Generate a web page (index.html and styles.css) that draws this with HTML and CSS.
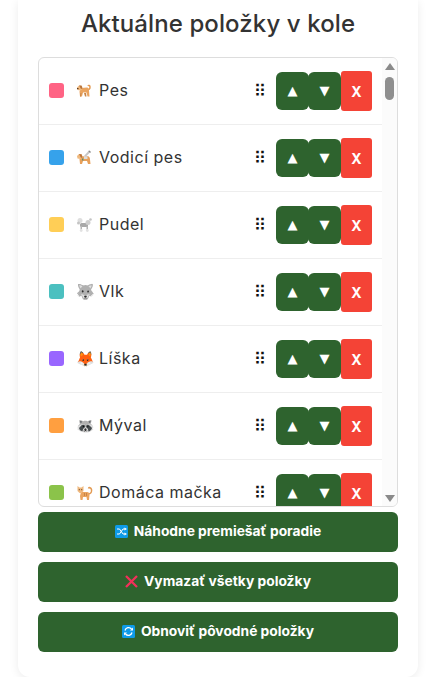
FILE: index.html
```html
<!DOCTYPE html>
<html lang="sk">
<head>
    <meta charset="UTF-8">
    <meta name="viewport" content="width=device-width, initial-scale=1.0">
    <title>Aktuálne položky v kole</title>
    <link rel="stylesheet" href="styles.css">
</head>
<body>
    <svg class="defs" aria-hidden="true">
        <symbol id="dog" viewBox="0 0 17 16">
            <path d="M11 6c2 1 3 0 3-2 0-1.500-1.500-2-2-1" fill="none" stroke="#e39a52" stroke-width="1.500"/>
            <path d="M5 5l6-.5c1.500 0 2 1.500 2 3l.5 6h-2l-1-4H7l-1 4H4l-.5-5z" fill="#eaa45f"/>
            <path d="M1 4.500L3 2.500l3 .5.500 3-2 1.500-3-.5z" fill="#f0b97e"/>
            <path d="M3 2.500l2.500 0 1 3-1.500.5z" fill="#b9743a"/>
            <path d="M8 10h2l.5 3.500H9zM4.500 10l1 0-.5 3.500H4z" fill="#c98547"/>
            <rect x="1" y="5" width="1.500" height="1.200" fill="#5b3a20"/>
        </symbol>
        <symbol id="guide-dog" viewBox="0 0 17 16">
            <path d="M5 6.500l6-.5c2 0 3 1.500 3 3.500l.5 4.500h-2.500L11 11H7l-1 3H4l-.5-5z" fill="#e8a05a"/>
            <path d="M1 6l2-2 3 .5.500 3-2 1.500-3-.5z" fill="#f0b97e"/>
            <path d="M3 4l2.500 .2 1 3L5 8z" fill="#b9743a"/>
            <path d="M6 9l1-.8.500 2-1 .5z" fill="#2f8f7f"/>
            <path d="M8 6l4-4.500 2 1-3.500 3.500z" fill="#c7c7c7"/>
            <path d="M12 1l1.500-.5 1.500 1.500-1 1z" fill="#8a8a8a"/>
            <path d="M8 6.200h3.500V9H8z" fill="#dcdcdc"/>
        </symbol>
        <symbol id="poodle" viewBox="0 0 17 16">
            <circle cx="4" cy="3.500" r="2.500" fill="#dedede"/>
            <circle cx="2.500" cy="6" r="1.500" fill="#c4c4c4"/>
            <rect x="4" y="6" width="8" height="4" rx="1.500" fill="#a9a9a9"/>
            <circle cx="12" cy="5.500" r="2.500" fill="#cfcfcf"/>
            <circle cx="14.500" cy="2.500" r="1.300" fill="#c4c4c4"/>
            <path d="M4.500 9h1.500v3.500H4.500zM10.500 9H12v3.500h-1.500z" fill="#b5b5b5"/>
            <circle cx="5.200" cy="13.500" r="1.400" fill="#e2e2e2"/>
            <circle cx="11.300" cy="13.500" r="1.400" fill="#e2e2e2"/>
        </symbol>
        <symbol id="cat" viewBox="0 0 17 16">
            <path d="M12 9c3 0 4-2 3.500-4.500C15 2.500 13 2 12.500 3.500" fill="none" stroke="#e39a52" stroke-width="1.500"/>
            <path d="M5 7h6c2 0 2.500 1.500 2.500 3l-.5 5h-2l-.5-3H7l-.5 3h-2l-.5-4z" fill="#eaa45f"/>
            <path d="M1.500 1l2 1.500h2L7.500 1 7.500 6 5.500 8h-2L1.500 6z" fill="#f0b97e"/>
            <path d="M8 8h1v3H8zM10 8h1v3h-1z" fill="#c98547"/>
            <rect x="2.800" y="4.200" width="1" height="1" fill="#5b3a20"/>
            <rect x="5.200" y="4.200" width="1" height="1" fill="#5b3a20"/>
        </symbol>
    </svg>

    <div class="card">
        <h2>Aktuálne položky v kole</h2>

        <div class="list-box">
            <ul class="item-list">
                <li class="item">
                    <span class="swatch swatch-pink"></span>
                    <svg class="emoji-icon"><use href="#dog"/></svg>
                    <span class="item-name">Pes</span>
                    <span class="handle">⠿</span>
                    <div class="item-buttons">
                        <button class="move-btn">▲</button>
                        <button class="move-btn">▼</button>
                        <button class="remove-btn">X</button>
                    </div>
                </li>
                <li class="item">
                    <span class="swatch swatch-blue"></span>
                    <svg class="emoji-icon"><use href="#guide-dog"/></svg>
                    <span class="item-name">Vodicí pes</span>
                    <span class="handle">⠿</span>
                    <div class="item-buttons">
                        <button class="move-btn">▲</button>
                        <button class="move-btn">▼</button>
                        <button class="remove-btn">X</button>
                    </div>
                </li>
                <li class="item">
                    <span class="swatch swatch-yellow"></span>
                    <svg class="emoji-icon"><use href="#poodle"/></svg>
                    <span class="item-name">Pudel</span>
                    <span class="handle">⠿</span>
                    <div class="item-buttons">
                        <button class="move-btn">▲</button>
                        <button class="move-btn">▼</button>
                        <button class="remove-btn">X</button>
                    </div>
                </li>
                <li class="item">
                    <span class="swatch swatch-teal"></span>
                    <span class="emoji">🐺</span>
                    <span class="item-name">Vlk</span>
                    <span class="handle">⠿</span>
                    <div class="item-buttons">
                        <button class="move-btn">▲</button>
                        <button class="move-btn">▼</button>
                        <button class="remove-btn">X</button>
                    </div>
                </li>
                <li class="item">
                    <span class="swatch swatch-purple"></span>
                    <span class="emoji">🦊</span>
                    <span class="item-name">Líška</span>
                    <span class="handle">⠿</span>
                    <div class="item-buttons">
                        <button class="move-btn">▲</button>
                        <button class="move-btn">▼</button>
                        <button class="remove-btn">X</button>
                    </div>
                </li>
                <li class="item">
                    <span class="swatch swatch-orange"></span>
                    <span class="emoji">🦝</span>
                    <span class="item-name">Mýval</span>
                    <span class="handle">⠿</span>
                    <div class="item-buttons">
                        <button class="move-btn">▲</button>
                        <button class="move-btn">▼</button>
                        <button class="remove-btn">X</button>
                    </div>
                </li>
                <li class="item">
                    <span class="swatch swatch-green"></span>
                    <svg class="emoji-icon"><use href="#cat"/></svg>
                    <span class="item-name">Domáca mačka</span>
                    <span class="handle">⠿</span>
                    <div class="item-buttons">
                        <button class="move-btn">▲</button>
                        <button class="move-btn">▼</button>
                        <button class="remove-btn">X</button>
                    </div>
                </li>
            </ul>
            <div class="scroll-track">
                <span class="arrow-up"></span>
                <span class="scroll-thumb"></span>
                <span class="arrow-down"></span>
            </div>
        </div>

        <div class="actions">
            <button class="action-btn">
                <svg class="btn-icon" viewBox="0 0 13 13">
                    <rect width="13" height="13" rx="1.500" fill="#0e9be8"/>
                    <path d="M2 4h2.500l3.500 5h2M2 9h2.500L8 4h2" fill="none" stroke="#fff" stroke-width="1"/>
                    <path d="M9.500 2.500L12 4 9.500 5.500zM9.500 7.500L12 9l-2.500 1.500z" fill="#fff"/>
                </svg>
                Náhodne premiešať poradie
            </button>
            <button class="action-btn">
                <svg class="btn-icon" viewBox="0 0 13 13">
                    <path d="M1 1l11 11M12 1L1 12" fill="none" stroke="#f2305a" stroke-width="2.300"/>
                </svg>
                Vymazať všetky položky
            </button>
            <button class="action-btn">
                <svg class="btn-icon" viewBox="0 0 13 13">
                    <rect width="13" height="13" rx="1.500" fill="#0e9be8"/>
                    <path d="M3 5.500A3.700 3.700 0 0 1 9.500 4M10 7.500A3.700 3.700 0 0 1 3.500 9" fill="none" stroke="#fff" stroke-width="1.300"/>
                    <path d="M8 5.500h3v-3zM5 7.500H2v3z" fill="#fff"/>
                </svg>
                Obnoviť pôvodné položky
            </button>
        </div>
    </div>
</body>
</html>
```

FILE: styles.css
```css
body {
    margin: 0;
    background-color: #fff;
    font-family: Inter, "Noto Sans", sans-serif;
    color: #333;
}
.defs {
    display: none;
}
.card {
    width: 400px;
    height: 677px;
    box-sizing: border-box;
    margin-left: 18px;
    padding: 0 20px;
    background-color: #fff;
    border-radius: 0 0 12px 12px;
    box-shadow: 0 2px 10px rgba(0,0,0,0.08);
}
h2 {
    margin: 0;
    height: 57px;
    line-height: 48px;
    text-align: center;
    font-size: 24px;
    font-weight: 500;
    letter-spacing: 0.1px;
    color: #333;
}
.list-box {
    display: flex;
    height: 450px;
    box-sizing: border-box;
    overflow: hidden;
    border: 1px solid #ddd;
    border-radius: 6px;
}
.item-list {
    flex: 1;
    margin: 0;
    padding: 0;
    list-style: none;
}
.item {
    display: flex;
    align-items: center;
    height: 67px;
    box-sizing: border-box;
    padding: 0 10px;
    border-bottom: 1px solid #eee;
}
.swatch {
    flex: none;
    width: 15px;
    height: 15px;
    margin: 0 12px 1px 0;
    border-radius: 3px;
}
.swatch-pink { background-color: #ff6384; }
.swatch-blue { background-color: #36a2eb; }
.swatch-yellow { background-color: #ffce56; }
.swatch-teal { background-color: #4bc0c0; }
.swatch-purple { background-color: #9966ff; }
.swatch-orange { background-color: #ff9f40; }
.swatch-green { background-color: #8bc34a; }
.emoji {
    flex: none;
    width: 17px;
    margin: 0 6px 2px 0;
    font-size: 15px;
}
.emoji-icon {
    flex: none;
    width: 17px;
    height: 16px;
    margin: 0 6px 1px 0;
}
.item-name {
    flex: 1;
    margin-bottom: 2px;
    font-size: 16px;
    letter-spacing: 0.5px;
    white-space: nowrap;
}
.handle {
    width: 20px;
    margin: 0 6px 0 0;
    font-family: "DejaVu Sans", sans-serif;
    font-size: 17px;
    text-align: center;
    color: #111;
}
.item-buttons {
    display: flex;
    align-items: center;
}
.item-buttons button {
    padding: 0;
    border: none;
    color: #fff;
}
.move-btn {
    width: 33px;
    height: 38px;
    background-color: #2e632e;
    border-radius: 6px;
    font-family: "DejaVu Sans", sans-serif;
    font-size: 13px;
    line-height: 34px;
}
.move-btn:first-child {
    margin-right: -1px;
}
.remove-btn {
    width: 31px;
    height: 40px;
    background-color: #f44336;
    border-radius: 3px;
    font-family: Inter, sans-serif;
    font-size: 14px;
    font-weight: bold;
}
.scroll-track {
    display: flex;
    flex: none;
    flex-direction: column;
    align-items: center;
    width: 15px;
    background-color: #fbfbfb;
}
.arrow-up {
    margin-top: 5px;
    border-left: 5px solid transparent;
    border-right: 5px solid transparent;
    border-bottom: 7px solid #8a8a8a;
}
.scroll-thumb {
    width: 9px;
    height: 23px;
    margin-top: 7px;
    background-color: #8f8f8f;
    border-radius: 5px;
}
.arrow-down {
    margin-top: auto;
    margin-bottom: 4px;
    border-left: 5px solid transparent;
    border-right: 5px solid transparent;
    border-top: 7px solid #8a8a8a;
}
.actions {
    display: flex;
    flex-direction: column;
    gap: 10px;
    margin-top: 5px;
}
.action-btn {
    display: flex;
    align-items: center;
    justify-content: center;
    gap: 6px;
    height: 40px;
    padding: 0 0 2px;
    border: none;
    background-color: #2e632e;
    border-radius: 6px;
    color: #fff;
    font-family: Inter, "Noto Sans", sans-serif;
    font-size: 13.8px;
    font-weight: 700;
}
.btn-icon {
    width: 13px;
    height: 13px;
}
```
